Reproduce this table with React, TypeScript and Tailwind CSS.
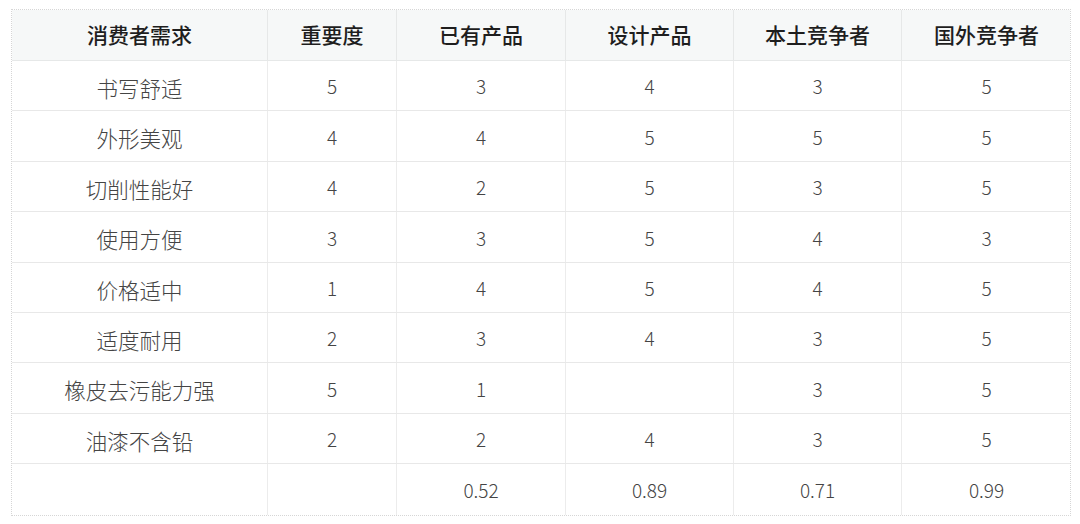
import React from 'react';

const headers = ['消费者需求', '重要度', '已有产品', '设计产品', '本土竞争者', '国外竞争者'];

const rows: string[][] = [
  ['书写舒适', '5', '3', '4', '3', '5'],
  ['外形美观', '4', '4', '5', '5', '5'],
  ['切削性能好', '4', '2', '5', '3', '5'],
  ['使用方便', '3', '3', '5', '4', '3'],
  ['价格适中', '1', '4', '5', '4', '5'],
  ['适度耐用', '2', '3', '4', '3', '5'],
  ['橡皮去污能力强', '5', '1', '', '3', '5'],
  ['油漆不含铅', '2', '2', '4', '3', '5'],
  ['', '', '0.52', '0.89', '0.71', '0.99'],
];

const cols = 'grid grid-cols-[256px_129px_169px_168px_168px_169px]';

export default function App() {
  return (
    <div className="w-[1080px] h-[524px] bg-white pt-[9px] pl-[11px]" style={{ fontFamily: '"Noto Sans CJK SC", "Noto Sans", sans-serif' }}>
      <div className="w-[1060px] border border-dotted border-[#d6d6d6]">
        <div className={`${cols} h-[51px] bg-[#f6f8f8] border-b border-[#e6e8e8]`}>
          {headers.map((h, i) => (
            <div
              key={h}
              className={`flex items-center justify-center text-[21px] font-medium text-[#1e1e1e] ${i < 5 ? 'border-r border-[#e6e8e8]' : ''}`}
            >
              {h}
            </div>
          ))}
        </div>
        {rows.map((r, ri) => (
          <div key={ri} className={`${cols} h-[50.4px] ${ri < rows.length - 1 ? 'border-b border-[#e8e8e8]' : ''}`}>
            {r.map((c, ci) => (
              <div
                key={ci}
                className={`flex items-center justify-center font-light text-[#444] ${ci === 0 ? 'text-[21.5px] pt-[5px]' : 'text-[19px] pt-[2px]'} ${ci < 5 ? 'border-r border-[#ececec]' : ''}`}
              >
                {c}
              </div>
            ))}
          </div>
        ))}
      </div>
    </div>
  );
}
